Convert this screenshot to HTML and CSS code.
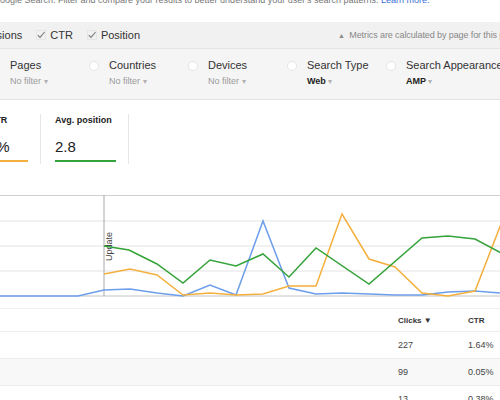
FILE: index.html
```html
<!DOCTYPE html>
<html>
<head>
<meta charset="utf-8">
<link rel="stylesheet" href="styles.css">
</head>
<body>
<div class="page">
  <p class="intro">Google Search. Filter and compare your results to better understand your user's search patterns. <a class="link">Learn more.</a></p>

  <div class="toolbar">
    <span class="metric-toggle first">Impressions</span>
    <span class="metric-toggle"><svg class="check" viewBox="0 0 10 10" width="10" height="10"><rect x="0.5" y="0.5" width="9" height="9" fill="none" stroke="#e6e6e6"/><path d="M1.8 5.2 L4 7.4 L8.6 2" fill="none" stroke="#7a7a7a" stroke-width="1.1"/></svg>CTR</span>
    <span class="metric-toggle"><svg class="check" viewBox="0 0 10 10" width="10" height="10"><rect x="0.5" y="0.5" width="9" height="9" fill="none" stroke="#e6e6e6"/><path d="M1.8 5.2 L4 7.4 L8.6 2" fill="none" stroke="#7a7a7a" stroke-width="1.1"/></svg>Position</span>
    <span class="note"><span class="warn">&#9650;</span> Metrics are calculated by page for this property</span>
  </div>

  <div class="filters">
    <div class="filter"><span class="radio"></span><div class="ftext"><div class="flabel">Pages</div><div class="fsub">No filter <span class="caret">&#9662;</span></div></div></div>
    <div class="filter"><span class="radio"></span><div class="ftext"><div class="flabel">Countries</div><div class="fsub">No filter <span class="caret">&#9662;</span></div></div></div>
    <div class="filter"><span class="radio"></span><div class="ftext"><div class="flabel">Devices</div><div class="fsub">No filter <span class="caret">&#9662;</span></div></div></div>
    <div class="filter"><span class="radio"></span><div class="ftext"><div class="flabel">Search Type</div><div class="fsub strong">Web <span class="caret">&#9662;</span></div></div></div>
    <div class="filter"><span class="radio"></span><div class="ftext"><div class="flabel">Search Appearance</div><div class="fsub strong">AMP <span class="caret">&#9662;</span></div></div></div>
  </div>

  <div class="cards">
    <div class="card">
      <div class="clabel">Avg. CTR</div>
      <div class="cvalue">0.66%</div>
      <div class="cbar orange"></div>
    </div>
    <div class="card">
      <div class="clabel">Avg. position</div>
      <div class="cvalue">2.8</div>
      <div class="cbar green"></div>
    </div>
  </div>

  <svg class="chart" width="500" height="102" viewBox="0 0 500 102">
    <line x1="0" y1="0.5" x2="500" y2="0.5" stroke="#cfcfcf"/>
    <line x1="0" y1="26" x2="500" y2="26" stroke="#e3e3e3"/>
    <line x1="0" y1="51" x2="500" y2="51" stroke="#e3e3e3"/>
    <line x1="0" y1="76" x2="500" y2="76" stroke="#e3e3e3"/>
    <line x1="0" y1="101" x2="500" y2="101" stroke="#c4c4c4"/>
    <line x1="104" y1="0" x2="104" y2="101" stroke="#a8a8a8"/>
    <text class="update" transform="translate(112,66) rotate(-90)">Update</text>
    <polyline fill="none" stroke="#6d9eeb" stroke-width="1.5" points="0,101 78,101 104,95 130,94 157,98 183,101 210,90 236,100 263,26 289,93 316,99 342,98 369,99 395,100 422,100 448,97 475,96 501,98"/>
    <polyline fill="none" stroke="#f4b03e" stroke-width="1.5" points="104,79 130,74 157,80 183,100 210,98 236,100 263,99 289,91 316,91 342,19 369,64 395,72 422,98 448,101 475,96 501,29"/>
    <polyline fill="none" stroke="#34a33a" stroke-width="1.5" points="104,51 129,55 157,69 183,88 210,65 236,71 263,59 289,82 316,53 369,89 422,43 448,41 475,44 501,58"/>
  </svg>

  <div class="table">
    <div class="row head"><span></span><span class="num">Clicks &#9660;</span><span class="num">CTR</span></div>
    <div class="row"><span></span><span class="num">227</span><span class="num">1.64%</span></div>
    <div class="row alt"><span></span><span class="num">99</span><span class="num">0.05%</span></div>
    <div class="row"><span></span><span class="num">13</span><span class="num">0.38%</span></div>
  </div>
</div>
</body>
</html>
```

FILE: styles.css
```css
html, body {
  margin: 0;
  padding: 0;
  background: #ffffff;
}
body {
  font-family: "Liberation Sans", Arial, sans-serif;
  color: #333;
  width: 500px;
  height: 400px;
  overflow: hidden;
}
.page {
  width: 500px;
  overflow: hidden;
}
.intro {
  margin: -5px 0 17px -7px;
  font-size: 9px;
  line-height: 10px;
  color: #777;
  white-space: nowrap;
}
.link {
  color: #3b6fd6;
}
.toolbar {
  height: 26px;
  background: #f1f1f1;
  border-bottom: 1px solid #e4e4e4;
  display: flex;
  align-items: center;
  white-space: nowrap;
  font-size: 11px;
  color: #333;
  overflow: hidden;
}
.metric-toggle {
  display: flex;
  align-items: center;
  margin-right: 14px;
  flex: none;
}
.metric-toggle.first {
  margin-left: -37px;
}
.check {
  margin-right: 4px;
  margin-top: -1px;
}
.note {
  flex: none;
  margin-left: 184px;
  font-size: 9px;
  letter-spacing: -0.1px;
  color: #888;
}
.warn {
  font-size: 7px;
  color: #8a8a8a;
  margin-right: 2px;
}
.filters {
  height: 51px;
  background: #f5f5f5;
  border-bottom: 1px solid #e2e2e2;
  display: grid;
  grid-template-columns: 99px 99px 99px 99px 140px;
  margin-left: -10px;
  box-sizing: border-box;
  width: 520px;
}
.filter {
  display: flex;
  align-items: flex-start;
  padding-top: 10px;
  white-space: nowrap;
}
.radio {
  width: 10px;
  height: 10px;
  border-radius: 50%;
  background: #fff;
  box-shadow: inset 0 0 0 1px #e3e3e3;
  margin-top: 2px;
  margin-right: 10px;
  flex: none;
}
.flabel {
  font-size: 11px;
  line-height: 13px;
  color: #333;
}
.fsub {
  margin-top: 4px;
  font-size: 9px;
  line-height: 11px;
  color: #9a9a9a;
}
.fsub.strong {
  font-weight: bold;
  color: #222;
}
.caret {
  font-size: 8px;
  color: #b0b0b0;
  font-weight: normal;
}
.cards {
  display: flex;
  margin-left: -47px;
  padding-top: 14px;
  height: 50px;
}
.card {
  width: 88px;
  box-sizing: border-box;
  padding: 1px 13px 0 14px;
  border-right: 1px solid #e6e6e6;
  white-space: nowrap;
}
.clabel {
  font-size: 9px;
  line-height: 11px;
  font-weight: bold;
  color: #222;
}
.cvalue {
  margin-top: 12px;
  font-size: 15px;
  line-height: 17px;
  color: #222;
}
.cbar {
  margin-top: 5px;
  height: 2px;
  width: 61px;
}
.cbar.orange { background: #f4b03e; }
.cbar.green { background: #34a33a; }
.chart {
  display: block;
  margin-top: 31px;
}
.update {
  font-family: "Liberation Sans", Arial, sans-serif;
  font-size: 9px;
  fill: #444;
}
.table {
  margin-top: 11px;
  border-top: 1px solid #f0f0f0;
  font-size: 9px;
  color: #444;
}
.row {
  display: grid;
  grid-template-columns: 398px 70px 1fr;
  height: 26px;
  align-items: center;
  border-bottom: 1px solid #ececec;
  white-space: nowrap;
}
.row.head {
  height: 22px;
  font-weight: bold;
  font-size: 8px;
  color: #333;
}
.row.alt {
  background: #f8f8f8;
}
.num {
  display: block;
}
```
